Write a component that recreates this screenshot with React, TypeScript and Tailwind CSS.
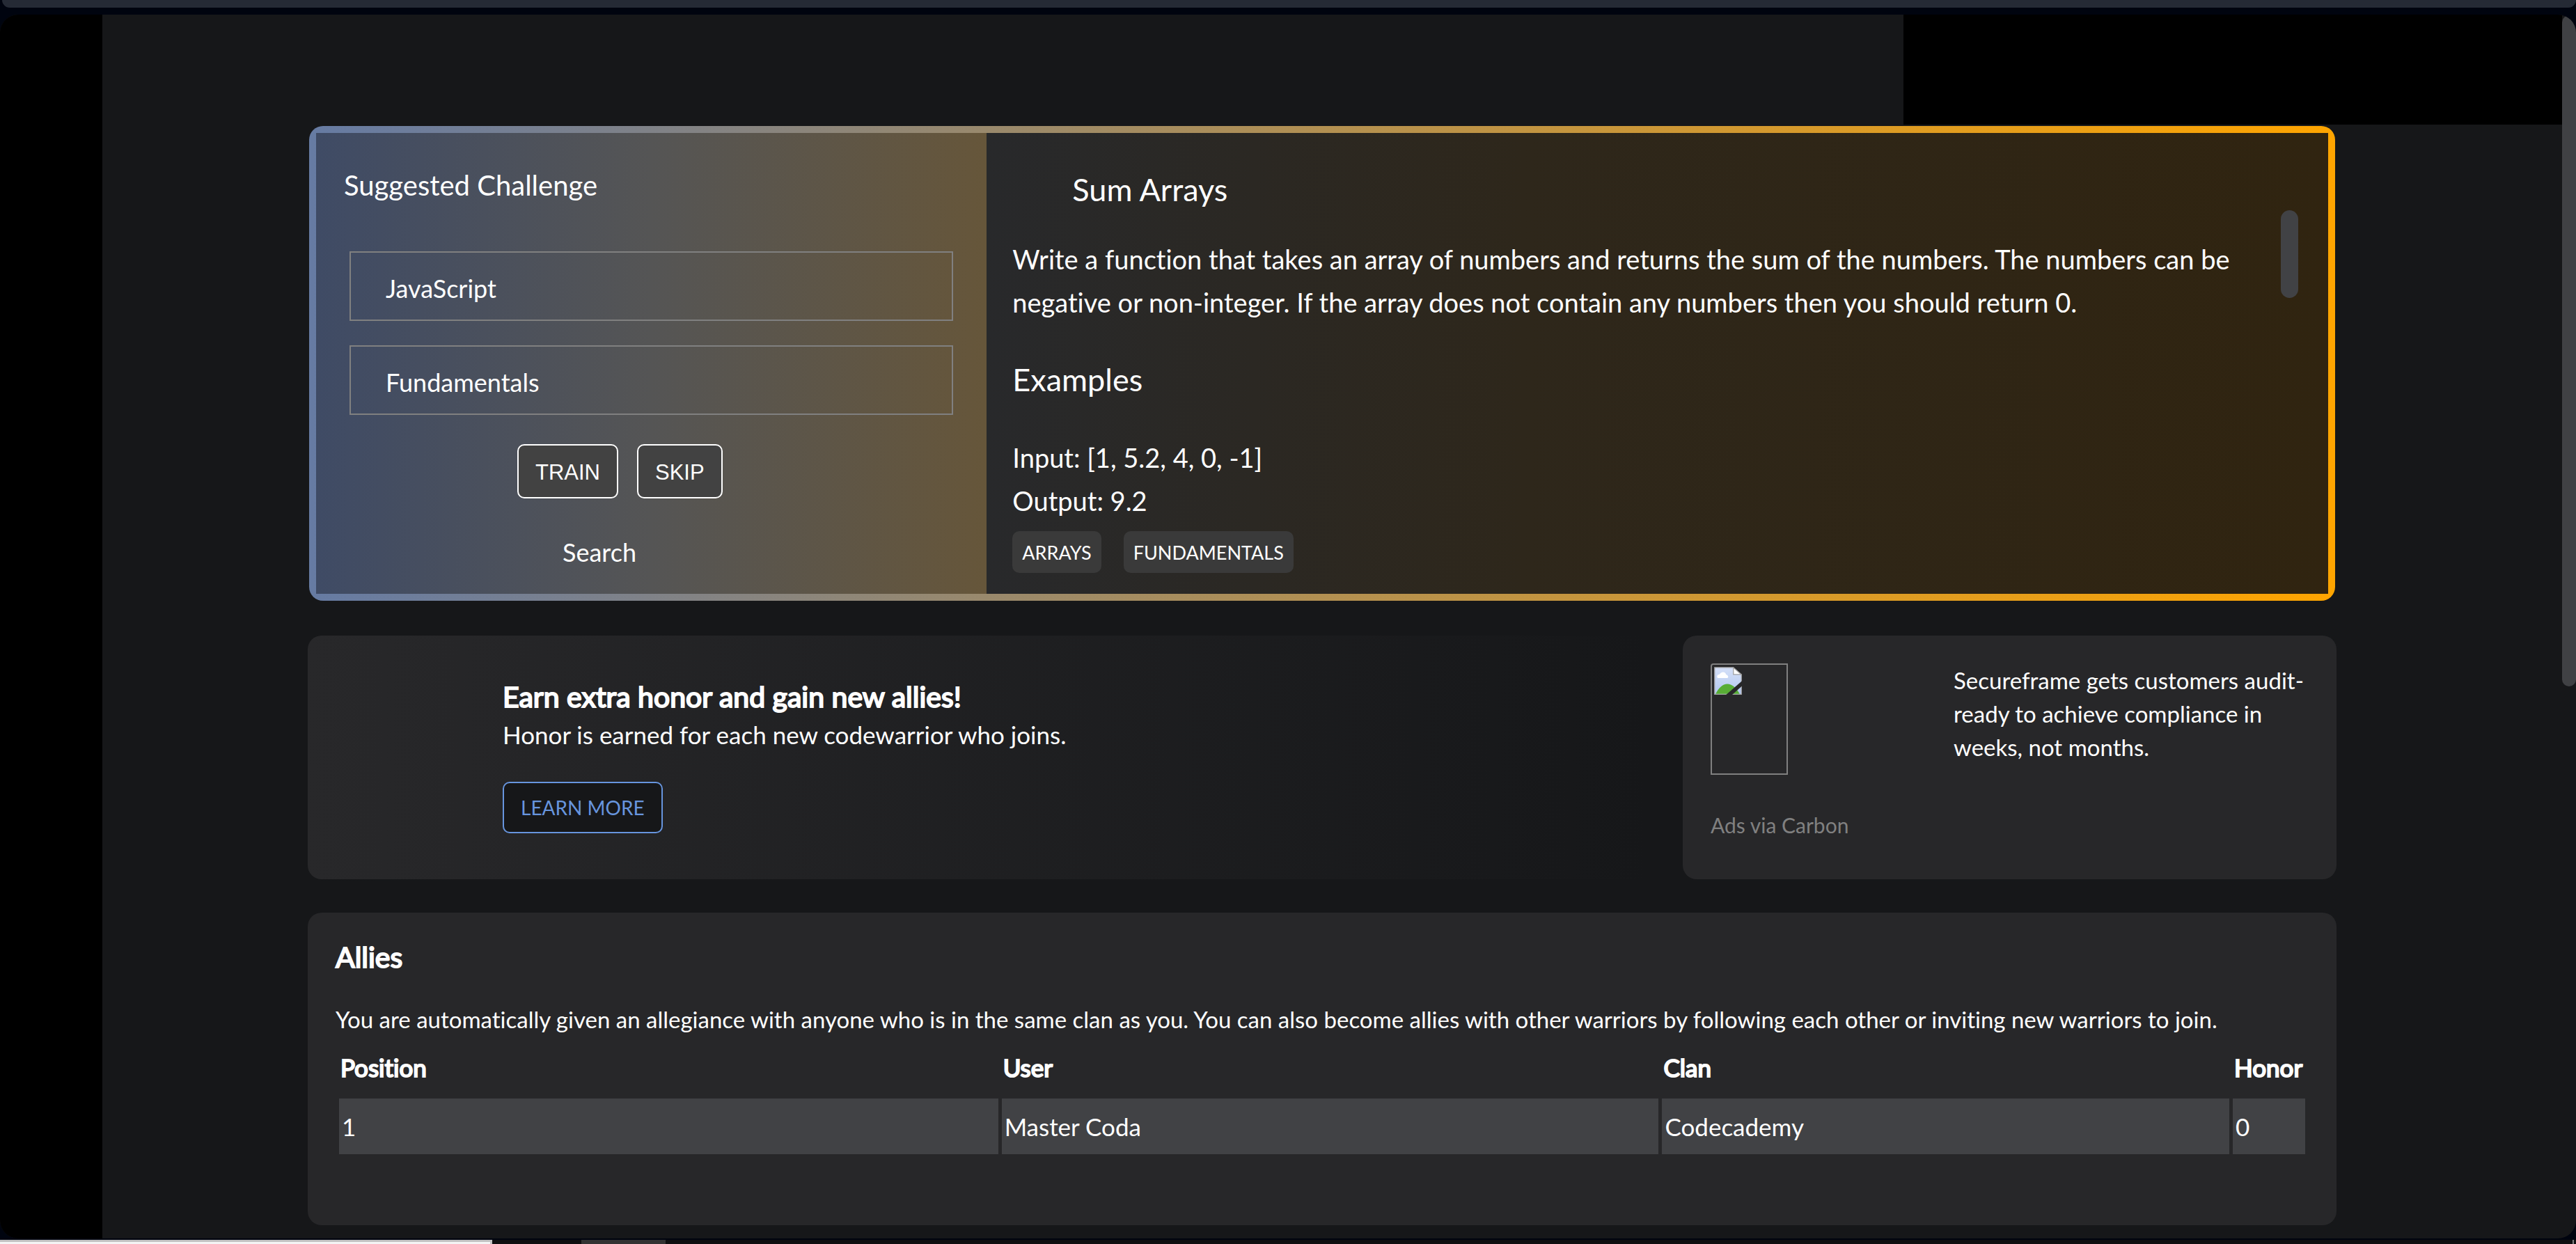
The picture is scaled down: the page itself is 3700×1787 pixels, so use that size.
import React from "react";

const allies = [{ position: 1, user: "Master Coda", clan: "Codecademy", honor: 0 }];

function PickerSelect({ label, options }: { label: string; options: string[] }) {
  return (
    <select
      aria-label={label}
      className="h-[100px] w-full appearance-none rounded-none border-2 border-[#808080] bg-transparent px-[50px] pt-[6px] text-[36px] leading-[60px] text-white"
    >
      {options.map((option) => (
        <option key={option}>{option}</option>
      ))}
    </select>
  );
}

function SuggestedChallenge() {
  return (
    <section className="mx-[2px] mt-[2px] flex rounded-[20px] bg-linear-to-r/srgb from-[#667ba3] to-[#ffa500] p-[10px]">
      <div className="w-1/3 bg-linear-to-r/srgb from-[#3f4b65] via-[#555555] to-[#66563a] pt-[51px] pb-[39px]">
        <h2 className="pl-10 text-[40px] leading-[48px]">Suggested Challenge</h2>
        <div className="mx-12 mt-[71px] flex flex-col gap-[35px]">
          <PickerSelect label="Language" options={["JavaScript", "Python", "TypeScript"]} />
          <PickerSelect label="Practice" options={["Fundamentals", "Rank Up", "Random"]} />
        </div>
        <div className="mt-[42px] ml-[30%] flex gap-[27px]">
          {["TRAIN", "SKIP"].map((action) => (
            <button
              key={action}
              type="button"
              className="h-[78px] rounded-[10px] border-2 border-white bg-[#424242] px-6 pt-1 font-['Liberation_Sans',sans-serif] text-[31px]"
            >
              {action}
            </button>
          ))}
        </div>
        <a href="#search" className="mt-[57px] ml-[354px] block w-fit text-[36px] leading-[41px]">
          Search
        </a>
      </div>
      <div className="flex flex-1 flex-col bg-linear-to-r/srgb from-[#28292b] via-[#2e271b] via-40% to-[#302410] pt-[55px] pr-[43px] pb-[30px] pl-[37px]">
        <h2 className="pl-[86px] text-[45px] leading-[53px]">Sum Arrays</h2>
        <div className="mt-[3px] flex justify-between">
          <div className="pt-[39px] text-[38px] leading-[62px]">
            <p className="max-w-[1790px]">
              Write a function that takes an array of numbers and returns the sum of the numbers. The numbers can be
              negative or non-integer. If the array does not contain any numbers then you should return 0.
            </p>
            <h3 className="my-[54px] text-[45px] leading-[53px]">Examples</h3>
            <p>
              Input: [1, 5.2, 4, 0, -1]
              <br />
              Output: 9.2
            </p>
          </div>
          <div className="h-[126px] w-[25px] shrink-0 rounded-full bg-[#414245]" />
        </div>
        <ul className="mt-[13px] flex gap-8 text-[27px]">
          {["ARRAYS", "FUNDAMENTALS"].map((tag) => (
            <li key={tag} className="flex h-[60px] items-center rounded-[10px] bg-[#3a3a3a] px-[14px] pt-[2px]">
              {tag}
            </li>
          ))}
        </ul>
      </div>
    </section>
  );
}

function BrokenImage() {
  return (
    <div role="img" aria-label="Sponsor" className="h-[160px] w-[111px] rounded-tl-[4px] border-2 border-[#808080] pt-[3px] pl-[3px]">
      <svg viewBox="0 0 16 16" className="size-10">
        <defs>
          <linearGradient id="sky" x1="0" y1="0" x2="0" y2="1">
            <stop offset="0" stopColor="#d5e0f8" />
            <stop offset="1" stopColor="#b3c8f0" />
          </linearGradient>
        </defs>
        <path d="M.3.3H11l4.700 4.200v11.200H.3z" fill="url(#sky)" stroke="#a0a0a0" strokeWidth=".5" />
        <path d="M1.700 5.500c0-.8.7-1.200 1.400-1.200C3.500 3.500 4.300 3 5.200 3s1.500.6 1.700 1.400c.7.1 1.200.7 1.200 1.300 0 .5-.3.7-.8.7H2.300c-.4 0-.6-.4-.6-.9z" fill="#fff" />
        <path d="M.9 15.500C2.500 12.200 5 9.800 7.600 9.800s5.200 2.200 7.100 5.700z" fill="#58ad35" />
        <path d="M11.100.4v3.900h4.500z" fill="#fff" stroke="#a0a0a0" strokeWidth=".5" />
        <path d="M16 8.100 6.900 16h3.500L16 11z" fill="#272729" />
      </svg>
    </div>
  );
}

function Promos() {
  return (
    <div className="mt-[50px] flex gap-12">
      <section className="h-[350px] flex-1 rounded-[20px] bg-linear-to-r/srgb from-[#28282a] to-[#161719] pt-[62px] pl-[280px]">
        <h2 className="text-[41px] leading-[52px] [-webkit-text-stroke:2px_white]">
          Earn extra honor and gain new allies!
        </h2>
        <p className="mt-2 text-[35px] leading-[41px]">Honor is earned for each new codewarrior who joins.</p>
        <button
          type="button"
          className="mt-[47px] h-[74px] rounded-[10px] border-2 border-[#6795de] bg-[#161719] px-6 text-[28px] text-[#6795de]"
        >
          LEARN MORE
        </button>
      </section>
      <aside className="h-[350px] w-[939px] rounded-[20px] bg-[#272729] p-10">
        <div className="flex justify-between">
          <BrokenImage />
          <p className="h-[160px] w-[510px] text-[33px] leading-[48px]">
            Secureframe gets customers audit-ready to achieve compliance in weeks, not months.
          </p>
        </div>
        <p className="mt-[53px] text-[30px] leading-[38px] text-[#808080]">Ads via Carbon</p>
      </aside>
    </div>
  );
}

function Allies() {
  return (
    <section className="mt-12 rounded-[20px] bg-[#272729] px-10 pt-[38px] pb-[97px]">
      <h2 className="text-[41px] leading-[52px] [-webkit-text-stroke:2px_white]">Allies</h2>
      <p className="mt-[43px] text-[33px] leading-[41px]">
        You are automatically given an allegiance with anyone who is in the same clan as you. You can also become allies
        with other warriors by following each other or inviting new warriors to join.
      </p>
      <table className="mt-[3px] w-full table-fixed border-separate border-spacing-[5px] text-left text-[35px] leading-[42px]">
        <thead>
          <tr className="h-20 [-webkit-text-stroke:2px_white]">
            <th className="w-[33.7%] pl-[2px] font-normal">Position</th>
            <th className="w-[33.6%] pl-[2px] font-normal">User</th>
            <th className="pl-[2px] font-normal">Clan</th>
            <th className="w-[104px] pl-[2px] font-normal">Honor</th>
          </tr>
        </thead>
        <tbody>
          {allies.map((ally) => (
            <tr key={ally.position} className="h-20">
              <td className="bg-[#414245] px-1">{ally.position}</td>
              <td className="bg-[#414245] px-1">{ally.user}</td>
              <td className="bg-[#414245] px-1">{ally.clan}</td>
              <td className="bg-[#414245] px-1">{ally.honor}</td>
            </tr>
          ))}
        </tbody>
      </table>
    </section>
  );
}

export default function App() {
  return (
    <div className="flex min-h-screen flex-col bg-[#00040f] font-[Lato,sans-serif] text-white [font-variant-ligatures:none]">
      <header className="ml-[3px] h-[11px] rounded-b-[20px] bg-[#252a35]" />
      <div className="mt-[10px] flex flex-1 overflow-hidden rounded-[26px] bg-[#161719]">
        <nav className="w-[147px] shrink-0 bg-black" />
        <div className="min-w-0 flex-1">
          <div className="flex h-[158px] justify-end">
            <div className="w-[946px] bg-black" />
          </div>
          <main className="pr-[324px] pb-[15px] pl-[295px]">
            <SuggestedChallenge />
            <Promos />
            <Allies />
          </main>
        </div>
        <div className="w-5 shrink-0 pt-px">
          <div className="h-[964px] rounded-full bg-[#404144]" />
        </div>
      </div>
      <footer className="mt-[2px] flex h-[6px] bg-[#0f0f10]">
        <div className="w-[707px] border-t-[3px] border-r-[3px] border-[#c1c1c1] bg-[#f4f4f4]" />
        <div className="ml-32 w-[121px] bg-[#333333]" />
        <div className="mr-[3px] ml-auto w-[2px] bg-[#808080]" />
      </footer>
    </div>
  );
}
